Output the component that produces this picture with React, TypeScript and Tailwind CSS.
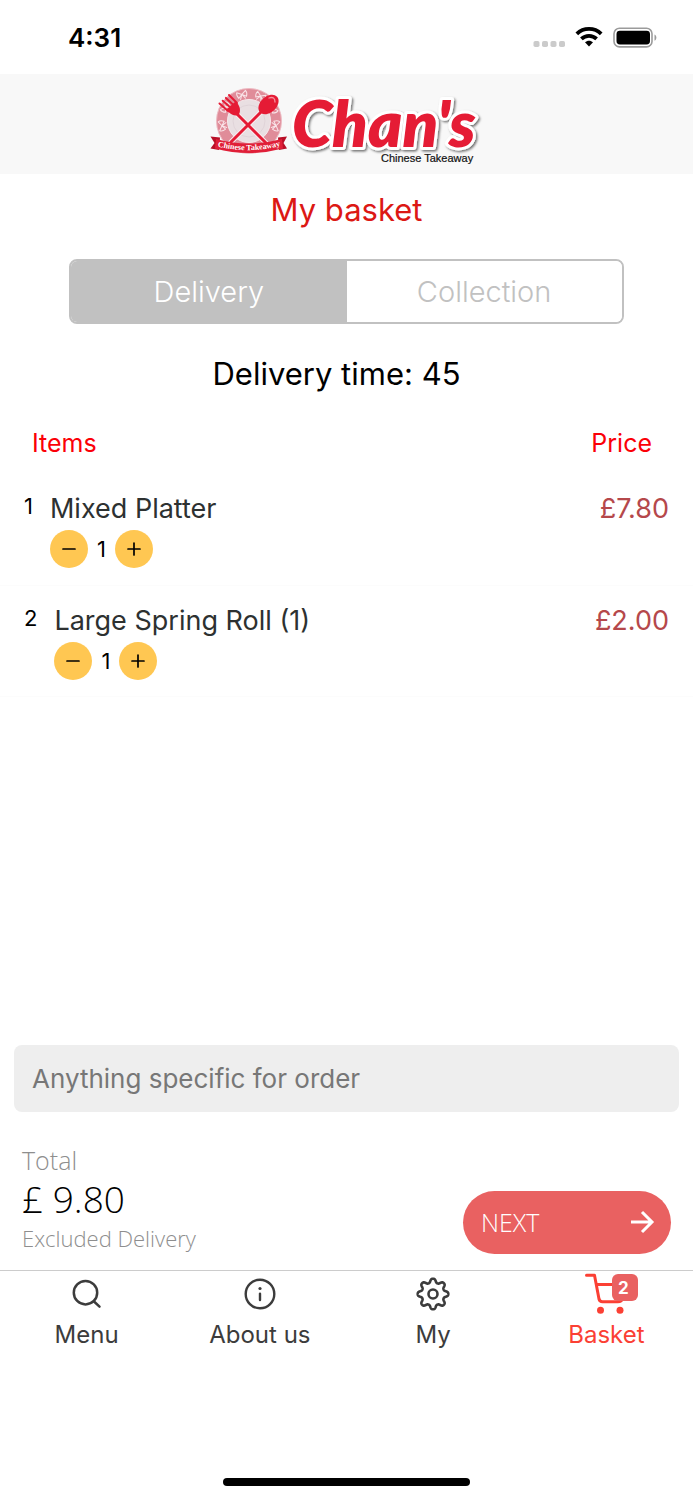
import { useState } from 'react';

type Item = { id: number; name: string; price: string };

const ITEMS: Item[] = [
  { id: 1, name: 'Mixed Platter', price: '£7.80' },
  { id: 2, name: 'Large Spring Roll (1)', price: '£2.00' },
];

function gearPath(cx: number, cy: number): string {
  const points: string[] = [];
  for (let i = 0; i < 240; i++) {
    const a = (i / 240) * Math.PI * 2;
    const wave = Math.tanh(1.4 * Math.cos(8 * a)) / Math.tanh(1.4);
    const r = 13.4 + 1.9 * wave;
    points.push(`${(cx + r * Math.sin(a)).toFixed(2)} ${(cy - r * Math.cos(a)).toFixed(2)}`);
  }
  return `M${points.join('L')}Z`;
}

function StatusBar() {
  return (
    <div className="flex h-[74px] items-center justify-between pt-0.5 pr-9 pl-[68px]">
      <span className="text-[26px] leading-8 font-semibold">4:31</span>
      <svg width="124" height="24" viewBox="0 0 124 24" aria-hidden="true">
        <g fill="#cbcbcb">
          <rect x="0.5" y="15" width="6" height="6" rx="1.8" />
          <rect x="9" y="15" width="6" height="6" rx="1.8" />
          <rect x="17.5" y="15" width="6" height="6" rx="1.8" />
          <rect x="26" y="15" width="6" height="6" rx="1.8" />
        </g>
        <g fill="none" stroke="#000" strokeWidth="3.8">
          <path d="M43.8 7.8C50.6 1.2 61.4 1.2 68.2 7.8" />
          <path d="M48.4 12.9C52.7 8.8 59.3 8.8 63.6 12.9" />
        </g>
        <path d="M52 16.3C54.3 14.2 57.7 14.2 60 16.3L56 20.5Z" />
        <rect x="81" y="2.3" width="38" height="18.6" rx="5.5" fill="none" stroke="#9b9b9b" strokeWidth="1.6" />
        <rect x="83.500" y="4.700" width="33.500" height="13.800" rx="3.400" />
        <path d="M121.500 8.500C124 9.500 124 13.700 121.500 14.700Z" fill="#9b9b9b" />
      </svg>
    </div>
  );
}

function Ornament({ angle }: { angle: number }) {
  return (
    <path
      transform={`rotate(${angle} 43 36)`}
      d="M43 8.500L38.500 5.500Q37 8 39 11.500ZM43 8.500L47.500 5.500Q49 8 47 11.500ZM43 8.500L40.500 13M43 8.500L45.500 13"
      fill="none"
      stroke="#f9e4e8"
      strokeWidth="1"
      strokeLinecap="round"
      strokeLinejoin="round"
    />
  );
}

function Logo() {
  return (
    <svg width="280" height="100" viewBox="0 0 280 100" role="img" aria-label="Chan's Chinese Takeaway">
      <defs>
        <path id="ribbon-line" d="M10 61Q42 69.500 76 60.500" />
        <filter id="soft-shadow" x="-10%" y="-10%" width="125%" height="130%">
          <feDropShadow dx="1.5" dy="1.5" stdDeviation="1" floodColor="#000" floodOpacity="0.550" />
        </filter>
      </defs>
      <g transform="translate(-1 11)">
        <circle cx="43" cy="36" r="32.500" fill="#e08c99" stroke="#eebcc4" strokeWidth="1" />
        {[-15, 25, 62, 100, 260, 300].map((angle) => (
          <Ornament key={angle} angle={angle} />
        ))}
        <circle cx="43" cy="36" r="21.500" fill="#e9dfe2" stroke="#f7e9ec" strokeWidth="1" />
        <circle cx="43" cy="36" r="16" fill="none" stroke="#ddd1d5" strokeWidth="0.800" />
        <g stroke="#f8eef0" strokeWidth="5" strokeLinecap="round">
          <path d="M31 29L60 58M55 27L25 57" />
        </g>
        <g stroke="#e51b35" strokeLinecap="round" fill="none">
          <path d="M30 28L60 58M56 26L25 57" strokeWidth="3" />
          <path d="M13.500 18.500L22 26M16.700 15.700L25 23M19.900 12.900L28 20.500M23 10L31 18" strokeWidth="2" />
        </g>
        <path d="M20.500 24.500L29.500 16.500C34 20.500 35 25 33 29.500C28.500 32 24 29.500 20.500 24.500Z" fill="#e51b35" />
        <ellipse cx="62.500" cy="19.500" rx="11.500" ry="8" transform="rotate(-42 62.500 19.500)" fill="#e51b35" />
        <path d="M63 13Q69 11 69 17" fill="none" stroke="#f6919d" strokeWidth="1.300" strokeLinecap="round" />
        <path d="M4.500 51.500L14 52.500L13 65L4.500 63.500L8.500 58Z" fill="#b80f27" />
        <path d="M81 51.500L72 52.500L73 65L81 63.500L77.500 58Z" fill="#b80f27" />
        <path d="M10 54Q43 63 76 54L77 63.500Q43 72.500 9 63.500Z" fill="#e01f38" />
        <text fontFamily="Liberation Serif, serif" fontWeight="700" fontSize="8" fill="#fff" textAnchor="middle">
          <textPath href="#ribbon-line" startOffset="50%">
            Chinese Takeaway
          </textPath>
        </text>
      </g>
      <text
        x="85"
        y="73"
        fontFamily="Lato, sans-serif"
        fontWeight="800"
        fontStyle="italic"
        fontSize="65"
        fill="#e51b35"
        stroke="#fff"
        strokeWidth="6"
        strokeLinejoin="round"
        paintOrder="stroke"
        filter="url(#soft-shadow)"
      >
        Chan&apos;s
      </text>
      <text x="174" y="88" fontFamily="Liberation Sans, sans-serif" fontSize="11" fill="#111" stroke="#111" strokeWidth="0.200">
        Chinese Takeaway
      </text>
    </svg>
  );
}

function RoundButton({ label, plus, onClick }: { label: string; plus?: boolean; onClick: () => void }) {
  return (
    <button
      type="button"
      aria-label={label}
      onClick={onClick}
      className="flex size-[38px] items-center justify-center rounded-full bg-[#ffc752]"
    >
      <svg width="14" height="14" viewBox="0 0 14 14" stroke="#000" strokeWidth="1.700" strokeLinecap="round" aria-hidden="true">
        <path d={plus ? 'M1 7H13M7 1V13' : 'M1 7H13'} />
      </svg>
    </button>
  );
}

function BasketRow({ item }: { item: Item }) {
  const [count, setCount] = useState(1);
  return (
    <tr className="h-[111px] border-b border-[#fcfcfc] align-top">
      <td className="pt-[18px] pl-6">
        <div className="flex gap-[17px]">
          <span className="text-[22px] leading-7">{item.id}</span>
          <div>
            <div className="text-[27px] leading-[34px] text-[#2d3131]">{item.name}</div>
            <div className="mt-1 flex items-center gap-2">
              <RoundButton label={`Remove one ${item.name}`} onClick={() => setCount(Math.max(0, count - 1))} />
              <span className="min-w-[11px] text-center text-[22px] leading-7">{count}</span>
              <RoundButton label={`Add one ${item.name}`} plus onClick={() => setCount(count + 1)} />
            </div>
          </div>
        </div>
      </td>
      <td className="pt-[18px] pr-6 text-right text-[27px] leading-[34px] text-[#b5484b]">{item.price}</td>
    </tr>
  );
}

function SearchIcon() {
  return (
    <svg width="40" height="44" viewBox="0 0 40 44" fill="none" stroke="#3c3c3c" strokeWidth="2.500" strokeLinecap="round" aria-hidden="true">
      <circle cx="18.500" cy="20.700" r="11.700" />
      <path d="M27 29.500L32.500 34.700" />
    </svg>
  );
}

function InfoIcon() {
  return (
    <svg width="40" height="44" viewBox="0 0 40 44" fill="none" stroke="#3c3c3c" strokeWidth="2.400" strokeLinecap="round" aria-hidden="true">
      <circle cx="20" cy="22" r="14.300" />
      <path d="M20 21.800V28" />
      <circle cx="20" cy="16.500" r="1.600" fill="#3c3c3c" stroke="none" />
    </svg>
  );
}

function GearIcon() {
  return (
    <svg width="40" height="44" viewBox="0 0 40 44" fill="none" stroke="#3c3c3c" strokeWidth="2.600" strokeLinejoin="round" aria-hidden="true">
      <path d={gearPath(20, 22)} />
      <circle cx="20" cy="22" r="4.500" />
    </svg>
  );
}

function CartIcon() {
  return (
    <svg width="44" height="44" viewBox="0 0 44 44" fill="none" stroke="#fb4034" strokeWidth="3" strokeLinecap="round" strokeLinejoin="round" aria-hidden="true">
      <path d="M2.500 3.300H10.500L15 27Q15.700 29.700 18.500 29.700H34Q37.500 29.700 38.500 27L41 12.500H12.500" />
      <circle cx="16.500" cy="38.200" r="3.500" fill="#fb4034" stroke="none" />
      <circle cx="36" cy="38.200" r="3.500" fill="#fb4034" stroke="none" />
    </svg>
  );
}

export default function App() {
  const [mode, setMode] = useState<'delivery' | 'collection'>('delivery');
  const active = 'flex-1 bg-[#c1c1c1] text-white';
  const idle = 'flex-1 bg-white text-[#c1c1c1]';

  return (
    <div className="flex min-h-screen flex-col bg-white font-['Inter',sans-serif] text-black">
      <StatusBar />
      <header className="flex h-[100px] items-center justify-center bg-[#f8f8f8]">
        <Logo />
      </header>

      <main className="flex flex-1 flex-col">
        <h1 className="pt-4 text-center text-[31px] leading-10 text-[#dc1814]">My basket</h1>

        <div className="mx-auto mt-[29px] flex h-[65px] w-4/5 overflow-hidden rounded-lg border-2 border-[#c1c1c1] text-[29px] font-light">
          <button type="button" aria-pressed={mode === 'delivery'} onClick={() => setMode('delivery')} className={mode === 'delivery' ? active : idle}>
            Delivery
          </button>
          <button type="button" aria-pressed={mode === 'collection'} onClick={() => setMode('collection')} className={mode === 'collection' ? active : idle}>
            Collection
          </button>
        </div>

        <p className="mt-[30px] pr-5 text-center text-[31px] leading-10">Delivery time: 45</p>

        <table className="mt-6 w-full border-collapse">
          <thead>
            <tr className="h-14 text-[25px] leading-8 text-[#fb0007]">
              <th scope="col" className="pb-1.5 pl-8 text-left font-normal">Items</th>
              <th scope="col" className="pr-[41px] pb-1.5 text-right font-normal">Price</th>
            </tr>
          </thead>
          <tbody>
            {ITEMS.map((item) => (
              <BasketRow key={item.id} item={item} />
            ))}
          </tbody>
        </table>

        <div className="mt-auto px-[14px]">
          <input
            type="text"
            aria-label="Anything specific for order"
            placeholder="Anything specific for order"
            className="h-[67px] w-full rounded-lg bg-[#eeeeee] px-[18px] text-[26px] placeholder:text-[#777777]"
          />
        </div>

        <section className="flex items-end justify-between pt-[30px] pr-[22px] pb-4 pl-[22px] font-['Open_Sans',sans-serif] font-light">
          <div>
            <div className="text-[25px] leading-9 text-[#8e8e8e]">Total</div>
            <div className="text-[37px] leading-[42px]">£ 9.80</div>
            <div className="pt-0.5 text-[22px] leading-8 text-[#8e8e8e]">Excluded Delivery</div>
          </div>
          <button type="button" className="flex h-[63px] w-52 items-center justify-between rounded-full bg-[#e96161] pr-4 pl-[18px] text-[25px] text-white">
            NEXT
            <svg width="26" height="26" viewBox="0 0 26 26" fill="none" stroke="#fff" strokeWidth="3" aria-hidden="true">
              <path d="M2 12H22M13 2L23 12L13 22" />
            </svg>
          </button>
        </section>
      </main>

      <nav className="grid grid-cols-4 border-t border-[#cccccc] pt-px text-[24px] leading-8 text-[#3c3c3c]">
        <a href="#menu" className="flex flex-col items-center gap-[3px]">
          <SearchIcon />
          Menu
        </a>
        <a href="#about" className="flex flex-col items-center gap-[3px]">
          <InfoIcon />
          About us
        </a>
        <a href="#my" className="flex flex-col items-center gap-[3px]">
          <GearIcon />
          My
        </a>
        <a href="#basket" className="flex flex-col items-center gap-[3px] text-[#fb4034]">
          <span className="relative">
            <CartIcon />
            <span className="absolute top-0.5 left-7 flex h-[27px] w-[26px] items-center justify-center rounded-md bg-[#e96161] pr-1 text-[17px] font-bold text-white">
              2
            </span>
          </span>
          Basket
        </a>
      </nav>

      <footer className="flex h-[149px] items-end justify-center pb-[14px]">
        <div className="h-2 w-[247px] rounded-full bg-black" />
      </footer>
    </div>
  );
}
